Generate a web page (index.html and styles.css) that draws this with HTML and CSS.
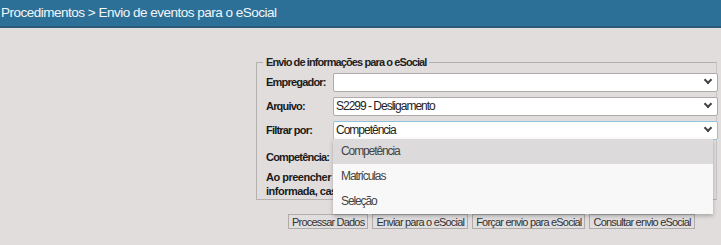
FILE: index.html
```html
<!DOCTYPE html>
<html lang="pt-BR">
<head>
    <meta charset="UTF-8">
    <title>Envio de eventos para o eSocial</title>
    <link rel="stylesheet" href="styles.css">
</head>
<body>
    <!-- Titulo -->
    <div class="topo">Procedimentos &gt; Envio de eventos para o eSocial</div>

    <div class="conteudo">
        <fieldset class="quadro">
            <legend>Envio de informações para o eSocial</legend>

            <div class="linha">
                <label>Empregador:</label>
                <div class="sel"><span></span><i class="seta"></i></div>
            </div>
            <div class="linha">
                <label>Arquivo:</label>
                <div class="sel"><span>S2299 - Desligamento</span><i class="seta"></i></div>
            </div>
            <div class="linha filtro">
                <label>Filtrar por:</label>
                <div class="sel foco"><span>Competência</span><i class="seta"></i></div>

                <!-- Lista aberta -->
                <ul class="lista">
                    <li class="ativo">Competência</li>
                    <li>Matrículas</li>
                    <li>Seleção</li>
                </ul>
            </div>
            <div class="linha comp">
                <label>Competência:</label>
            </div>
            <p class="aviso">Ao preencher a competência, serão enviados somente os eventos da competência<br>informada, caso contrário serão enviados todos os eventos pendentes de envio.</p>
        </fieldset>

        <div class="botoes">
            <button>Processar Dados</button>
            <button>Enviar para o eSocial</button>
            <button>Forçar envio para eSocial</button>
            <button>Consultar envio eSocial</button>
        </div>
    </div>
</body>
</html>
```

FILE: styles.css
```css
* { margin: 0; padding: 0; box-sizing: border-box; }
body { background: #e2dddd; font-family: "Liberation Sans", Arial, sans-serif; font-size: 11px; color: #111; height: 245px; overflow: hidden; }
.topo { height: 28px; background: #2d7097; border-bottom: 2px solid #285a79; color: #f2f6f9; font-size: 13.5px; letter-spacing: -0.5px; line-height: 26px; padding-left: 1px; }
.conteudo { padding: 28px 4px 0 256px; }
.quadro { border: 1px solid #b5b1b1; border-right-color: #c9c5c5; padding: 2px 0 8px 9px; height: 144px; }
.quadro legend { font-weight: bold; letter-spacing: -0.9px; padding: 0 3px; margin-left: -3px; color: #222; }
.linha { display: flex; align-items: center; height: 24px; position: relative; }
.linha label { width: 67px; font-weight: bold; letter-spacing: -0.8px; color: #1a1a1a; flex-shrink: 0; }
.sel { flex: 1; height: 19px; margin-right: -2px; background: #fff; border: 1px solid #aeaaaa; border-radius: 2px; display: flex; align-items: center; justify-content: space-between; padding: 0 6px 0 2px; font-size: 12px; letter-spacing: -1px; color: #222; }
.sel.foco { border-color: #93c4de; }
.seta { width: 6px; height: 6px; border-right: 2px solid #444; border-bottom: 2px solid #444; transform: rotate(45deg); margin-top: -4px; }
.comp { height: 26px; margin-top: 2px; }
.aviso { font-weight: bold; letter-spacing: -0.5px; line-height: 14px; color: #1a1a1a; white-space: nowrap; overflow: hidden; }
.lista { list-style: none; position: absolute; left: 67px; top: 21px; width: 380px; background: #f8f8f8; box-shadow: 0 2px 4px rgba(0, 0, 0, 0.25); font-size: 12px; letter-spacing: -1.1px; color: #444; z-index: 5; }
.lista li { height: 25px; line-height: 25px; padding-left: 8px; }
.lista li.ativo { background: #dcdada; }
.botoes { display: flex; gap: 4px; padding-left: 32px; margin-top: 14px; }
.botoes button { font-family: "Liberation Sans", Arial, sans-serif; font-size: 11px; letter-spacing: -0.8px; white-space: nowrap; color: #333; background: #e0dede; border: 1px solid #b0acac; height: 15px; line-height: 12px; padding: 0 3px; }
```
